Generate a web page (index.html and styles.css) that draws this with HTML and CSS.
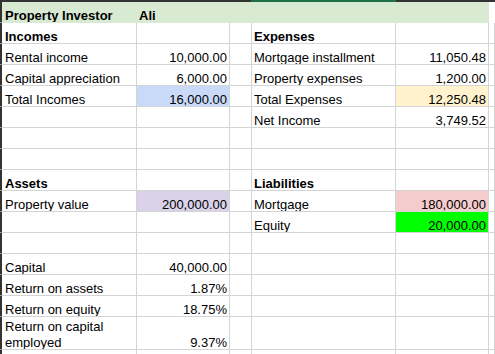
FILE: index.html
```html
<!DOCTYPE html>
<html>
<head>
<meta charset="utf-8">
<link rel="stylesheet" href="styles.css">
</head>
<body>
<div class="topbar"><div class="seg dark a"></div><div class="seg sel"></div><div class="seg dark b"></div></div>
<div class="sheet">
  <!-- row 1 -->
  <div class="rh"></div>
  <div class="c hdr bold"><span>Property Investor</span></div>
  <div class="c hdr bold"><span>Ali</span></div>
  <div class="c hdr"></div>
  <div class="c hdr"></div>
  <div class="c hdr"></div>
  <div class="c f1"></div>
  <!-- row 2 -->
  <div class="rh"></div>
  <div class="c bold"><span>Incomes</span></div>
  <div class="c"></div>
  <div class="c"></div>
  <div class="c bold"><span>Expenses</span></div>
  <div class="c"></div>
  <div class="c"></div>
  <!-- row 3 -->
  <div class="rh"></div>
  <div class="c"><span>Rental income</span></div>
  <div class="c num"><span>10,000.00</span></div>
  <div class="c"></div>
  <div class="c"><span>Mortgage installment</span></div>
  <div class="c num"><span>11,050.48</span></div>
  <div class="c"></div>
  <!-- row 4 -->
  <div class="rh"></div>
  <div class="c"><span>Capital appreciation</span></div>
  <div class="c num"><span>6,000.00</span></div>
  <div class="c"></div>
  <div class="c"><span>Property expenses</span></div>
  <div class="c num"><span>1,200.00</span></div>
  <div class="c"></div>
  <!-- row 5 -->
  <div class="rh"></div>
  <div class="c"><span>Total Incomes</span></div>
  <div class="c num blue"><span>16,000.00</span></div>
  <div class="c"></div>
  <div class="c"><span>Total Expenses</span></div>
  <div class="c num yellow"><span>12,250.48</span></div>
  <div class="c"></div>
  <!-- row 6 -->
  <div class="rh"></div>
  <div class="c"></div>
  <div class="c"></div>
  <div class="c"></div>
  <div class="c"><span>Net Income</span></div>
  <div class="c num"><span>3,749.52</span></div>
  <div class="c"></div>
  <!-- row 7 -->
  <div class="rh"></div>
  <div class="c"></div><div class="c"></div><div class="c"></div><div class="c"></div><div class="c"></div><div class="c"></div>
  <!-- row 8 -->
  <div class="rh"></div>
  <div class="c"></div><div class="c"></div><div class="c"></div><div class="c"></div><div class="c"></div><div class="c"></div>
  <!-- row 9 -->
  <div class="rh"></div>
  <div class="c bold"><span>Assets</span></div>
  <div class="c"></div>
  <div class="c"></div>
  <div class="c bold"><span>Liabilities</span></div>
  <div class="c"></div>
  <div class="c"></div>
  <!-- row 10 -->
  <div class="rh"></div>
  <div class="c"><span>Property value</span></div>
  <div class="c num purple"><span>200,000.00</span></div>
  <div class="c"></div>
  <div class="c"><span>Mortgage</span></div>
  <div class="c num pink"><span>180,000.00</span></div>
  <div class="c"></div>
  <!-- row 11 -->
  <div class="rh"></div>
  <div class="c"></div>
  <div class="c"></div>
  <div class="c"></div>
  <div class="c"><span>Equity</span></div>
  <div class="c num green"><span>20,000.00</span></div>
  <div class="c"></div>
  <!-- row 12 -->
  <div class="rh"></div>
  <div class="c"></div><div class="c"></div><div class="c"></div><div class="c"></div><div class="c"></div><div class="c"></div>
  <!-- row 13 -->
  <div class="rh"></div>
  <div class="c"><span>Capital</span></div>
  <div class="c num"><span>40,000.00</span></div>
  <div class="c"></div><div class="c"></div><div class="c"></div><div class="c"></div>
  <!-- row 14 -->
  <div class="rh"></div>
  <div class="c"><span>Return on assets</span></div>
  <div class="c num"><span>1.87%</span></div>
  <div class="c"></div><div class="c"></div><div class="c"></div><div class="c"></div>
  <!-- row 15 -->
  <div class="rh"></div>
  <div class="c"><span>Return on equity</span></div>
  <div class="c num"><span>18.75%</span></div>
  <div class="c"></div><div class="c"></div><div class="c"></div><div class="c"></div>
  <!-- row 16 -->
  <div class="rh"></div>
  <div class="c wrap"><span>Return on capital employed</span></div>
  <div class="c num"><span>9.37%</span></div>
  <div class="c"></div><div class="c"></div><div class="c"></div><div class="c"></div>
  <!-- row 17 -->
  <div class="rh"></div>
  <div class="c"></div><div class="c"></div><div class="c"></div><div class="c"></div><div class="c"></div><div class="c"></div>
</div>
</body>
</html>
```
FILE: styles.css
```css
html, body {
  margin: 0;
  padding: 0;
  background: #ffffff;
  overflow: hidden;
}

body {
  font-family: "Liberation Sans", Arial, sans-serif;
  font-size: 13px;
  color: #000000;
}

.topbar {
  display: flex;
  height: 2px;
}

.seg.dark { background: #333333; }
.seg.a { width: 251px; }
.seg.sel { width: 145px; background: #1e7145; }
.seg.b { flex: 1; }

.sheet {
  display: grid;
  grid-template-columns: 2px 135px 93px 22px 144px 93px 1fr;
  grid-template-rows: repeat(15, 21px) 33px 21px;
}

.rh {
  background: #333333;
  border-bottom: 1px solid #9a9a9a;
}

.c {
  box-sizing: border-box;
  border-right: 1px solid #d4d4d4;
  border-bottom: 1px solid #d4d4d4;
  display: flex;
  align-items: flex-end;
  padding: 0 2px 0 3px;
  overflow: hidden;
  white-space: nowrap;
}

.c span {
  line-height: 16px;
  margin-bottom: -1.5px;
}

.c + .c {
  padding-left: 2px;
}

.num { justify-content: flex-end; }

.bold { font-weight: bold; }

.hdr {
  background: #d9ead3;
  border-right-color: #d9ead3;
  border-bottom-color: #d9ead3;
}

.f1 {
  border-right: none;
  border-bottom-color: #ffffff;
}

.wrap { white-space: normal; }

.blue { background: #c9daf8; }
.yellow { background: #fff2cc; }
.purple { background: #d9d2e9; }
.pink { background: #f4cccc; }
.green { background: #00ff00; }
```
